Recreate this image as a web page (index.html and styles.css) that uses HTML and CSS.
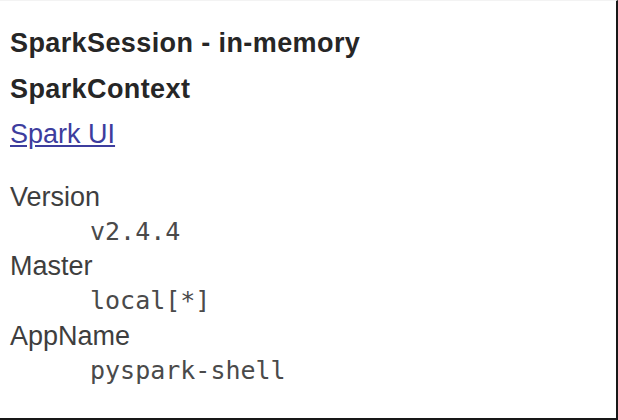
FILE: index.html
```
<!DOCTYPE html>
<html>
<head>
<meta charset="utf-8">
<link rel="stylesheet" href="styles.css">
</head>
<body>
<div class="frame">
  <p class="title"><b>SparkSession - in-memory</b></p>
  <div class="ctx">
    <p class="title"><b>SparkContext</b></p>
    <p class="link-line"><a class="ui-link" href="#">Spark UI</a></p>
    <dl class="props">
      <dt>Version</dt>
      <dd><code>v2.4.4</code></dd>
      <dt>Master</dt>
      <dd><code>local[*]</code></dd>
      <dt>AppName</dt>
      <dd><code>pyspark-shell</code></dd>
    </dl>
  </div>
</div>
</body>
</html>
```
FILE: styles.css
```
html, body {
  margin: 0;
  padding: 0;
  background: #ffffff;
}
.frame {
  width: 618px;
  height: 420px;
  box-sizing: border-box;
  border-top: 1px solid #f3f3f3;
  border-right: 2px solid #181818;
  border-bottom: 2px solid #181818;
  padding: 20px 0 0 10px;
  font-family: "Liberation Sans", Arial, sans-serif;
  overflow: hidden;
}
.title, .link-line {
  margin: 0;
  font-size: 27px;
  line-height: 45.5px;
}
.title b {
  font-weight: bold;
  color: #262626;
  letter-spacing: 0.4px;
}
.ui-link {
  color: #3d3d9e;
  text-decoration: underline;
}
.props {
  margin: 22px 0 0 0;
}
.props dt {
  font-size: 27px;
  line-height: 34.3px;
  color: #3e3e3e;
}
.props dd {
  margin: 0 0 0 80px;
  font-size: 25px;
  line-height: 34.3px;
}
.props code {
  font-family: "DejaVu Sans Mono", "Liberation Mono", monospace;
  font-size: 25px;
  line-height: 34.3px;
  color: #4a4a4a;
}
```
